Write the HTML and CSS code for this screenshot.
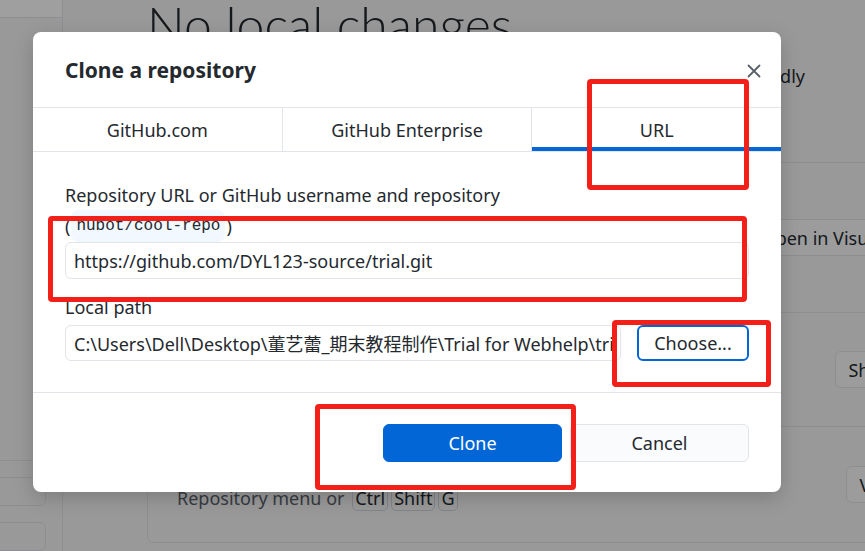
FILE: index.html
```html
<!DOCTYPE html>
<html lang="en">
<head>
<meta charset="utf-8">
<title>Clone a repository</title>
<link rel="stylesheet" href="styles.css">
</head>
<body>
<div class="app">
  <aside class="sidebar">
    <div class="side-top"></div>
    <div class="side-list"></div>
    <div class="side-bottom">
      <div class="side-card"></div>
      <div class="side-card"></div>
    </div>
  </aside>
  <main class="main">
    <h1 class="blank-title">No local changes</h1>
    <p class="blank-desc">There are no uncommitted changes in this repository. Here are some friendly</p>
    <div class="panel">
      <div class="row row-a">
        <div class="row-text">
          <div class="row-title">Open the repository in your external editor</div>
          <div class="row-desc">Select your editor in Options</div>
        </div>
        <button class="bg-btn">Open in Visual Studio Code</button>
      </div>
      <div class="row row-b">
        <div class="row-text">
          <div class="row-title">View the files of your repository in Explorer</div>
          <div class="row-desc">Repository menu or Ctrl Shift F</div>
        </div>
        <button class="bg-btn">Show in Explorer</button>
      </div>
      <div class="row row-c">
        <div class="row-text">
          <div class="row-title">Open the repository page on GitHub in your browser</div>
          <div class="row-desc">Repository menu or <kbd>Ctrl</kbd><kbd>Shift</kbd><kbd>G</kbd></div>
        </div>
        <button class="bg-btn">View on GitHub</button>
      </div>
    </div>
  </main>
</div>

<div class="overlay"></div>

<div class="dialog">
  <header class="dlg-header">
    <h2 class="dlg-title">Clone a repository</h2>
    <button class="close-btn" aria-label="Close">
      <svg width="14" height="14" viewBox="0 0 14 14"><path d="M1.5 1.5L12.5 12.5M12.5 1.5L1.5 12.5" stroke="#586069" stroke-width="1.8" stroke-linecap="round"/></svg>
    </button>
  </header>
  <nav class="tabs">
    <div class="tab">GitHub.com</div>
    <div class="tab">GitHub Enterprise</div>
    <div class="tab selected">URL</div>
  </nav>
  <div class="dlg-body">
    <div class="label">Repository URL or GitHub username and repository</div>
    <div class="hint"><span>(</span><code>hubot/cool-repo</code><span>)</span></div>
    <input class="field field-url" type="text" value="https://github.com/DYL123-source/trial.git" readonly>
    <div class="label label-path">Local path</div>
    <div class="path-row">
      <input class="field field-path" type="text" value="C:\Users\Dell\Desktop\董艺蕾_期末教程制作\Trial for Webhelp\trial" readonly>
      <button class="btn choose-btn">Choose...</button>
    </div>
  </div>
  <footer class="dlg-footer">
    <button class="btn btn-primary">Clone</button>
    <button class="btn btn-cancel">Cancel</button>
  </footer>
</div>

<div class="mark mark-tab"></div>
<div class="mark mark-url"></div>
<div class="mark mark-choose"></div>
<div class="mark mark-clone"></div>
</body>
</html>
```

FILE: styles.css
```css
* { box-sizing: border-box; }
html, body { margin: 0; padding: 0; }
body {
  width: 865px;
  height: 551px;
  overflow: hidden;
  position: relative;
  font-family: "Noto Sans", "Open Sans", "Noto Sans CJK SC", sans-serif;
  color: #24292e;
  background: #f5f6f7;
}

/* ---------- background app ---------- */
.app { display: flex; height: 551px; }
.sidebar {
  width: 63px; flex: none;
  border-right: 1px solid #e1e4e8;
  display: flex; flex-direction: column;
  background: #f5f6f7;
}
.side-top { height: 18px; background: #ffffff; border-bottom: 1px solid #e1e4e8; }
.side-list { flex: 1; }
.side-bottom {
  height: 91px; flex: none;
  border-top: 1px solid #e1e4e8;
  padding: 16px 16px 0 0;
  display: flex; flex-direction: column; gap: 16px;
}
.side-card { height: 36px; margin-left: -12px; border: 1px solid #e1e4e8; border-radius: 6px; }

.main { flex: 1; min-width: 0; overflow: hidden; padding-left: 84px; }
.blank-title {
  margin: 0; padding-top: 0;
  font-family: Lato, "Open Sans", sans-serif;
  font-weight: 300; font-size: 50px; line-height: 48px;
  color: #24292e; white-space: nowrap;
}
.blank-desc {
  margin: 17px 0 0; width: 658px;
  font-size: 18px; line-height: 22px;
  text-align: right; white-space: nowrap; overflow: hidden;
  direction: rtl;
}
.panel {
  margin-top: 75px; width: 869px;
  border: 1px solid #e1e4e8; border-radius: 6px;
}
.row {
  display: flex; align-items: center; justify-content: space-between;
  padding: 0 12px 0 29px;
  border-bottom: 1px solid #e1e4e8;
}
.row:last-child { border-bottom: none; }
.row-a { height: 150px; }
.row-b { height: 114px; }
.row-c { height: 115px; }
.row-title { font-size: 18px; font-weight: 600; line-height: 22px; }
.row-desc { font-size: 18px; line-height: 25px; color: #586069; margin-top: 5px; }
kbd {
  font-family: inherit; font-size: 18px; color: #24292e;
  border: 1px solid #d1d5da; border-radius: 5px;
  padding: 0 2px; margin-left: 3px;
}
.bg-btn {
  height: 37px; padding: 0 12px;
  font: 18px "Noto Sans", sans-serif; color: #24292e;
  background: #fafbfc; border: 1px solid #e1e4e8; border-radius: 6px;
  white-space: nowrap;
}

.overlay { position: absolute; inset: 0; background: rgba(0, 0, 0, 0.375); }

/* ---------- dialog ---------- */
.dialog {
  position: absolute; left: 33px; top: 32px;
  width: 748px; height: 460px;
  background: #fff; border-radius: 8px;
  display: flex; flex-direction: column;
  box-shadow: 0 6px 20px rgba(0, 0, 0, 0.18);
}
.dlg-header {
  height: 75px; flex: none;
  display: flex; align-items: center; justify-content: space-between;
  padding: 0 20px 0 32px;
}
.dlg-title { margin: 0; font-size: 21px; font-weight: 700; line-height: 26px; padding-top: 1px; }
.close-btn {
  width: 14px; height: 14px; padding: 0; border: none; background: none;
  display: flex; margin-top: 2px;
}
.tabs {
  display: flex; height: 45px; flex: none;
  border-top: 1px solid #e1e4e8; border-bottom: 1px solid #e1e4e8;
}
.tab {
  flex: 1; display: flex; align-items: center; justify-content: center;
  font-size: 18px; border-right: 1px solid #e1e4e8;
}
.tab:last-child { border-right: none; }
.tab.selected { box-shadow: inset 0 -4px 0 #0366d6; }

.dlg-body { padding: 32px 32px 0; height: 241px; flex: none; border-bottom: 1px solid #e1e4e8; }
.label { font-size: 18px; line-height: 22px; }
.hint {
  display: flex; align-items: center;
  height: 24px; margin-top: 8px;
  font-size: 18px; line-height: 22px;
}
.hint code {
  font-family: "Liberation Mono", monospace; font-size: 16px; line-height: 20px;
  background: #f1f8ff; border-radius: 8px; padding: 6px 5px; margin: 0 1px;
}
.field {
  display: block; width: 100%;
  font: 18px "Noto Sans", "Noto Sans CJK SC", sans-serif; color: #24292e;
  border: 1px solid #e1e4e8; border-radius: 6px;
  padding: 0 8px; background: #fff; outline: none;
}
.field-url { height: 37px; margin-top: 4px; }
.label-path { margin-top: 17px; }
.path-row { display: flex; gap: 16px; align-items: center; margin-top: 7px; }
.field-path { flex: 1; height: 36px; min-width: 0; }
.btn {
  font: 18px "Noto Sans", sans-serif; border-radius: 6px; cursor: pointer;
}
.choose-btn {
  width: 112px; height: 36px; flex: none;
  background: #fff; color: #24292e; border: 2px solid #0366d6;
}
.dlg-footer {
  flex: 1; display: flex; justify-content: flex-end; gap: 8px;
  padding: 31px 32px 0 0;
}
.btn-primary, .btn-cancel { width: 179px; height: 38px; }
.btn-primary { background: #0366d6; color: #fff; border: 1px solid #0366d6; }
.btn-cancel { background: #fafbfc; color: #24292e; border: 1px solid #e1e4e8; }

/* ---------- red annotation marks ---------- */
.mark { position: absolute; border: 5px solid #f3201a; border-radius: 4px; }
.mark-tab { left: 587px; top: 79px; width: 162px; height: 111px; }
.mark-url { left: 48px; top: 216px; width: 699px; height: 86px; }
.mark-choose { left: 612px; top: 320px; width: 159px; height: 67px; }
.mark-clone { left: 315px; top: 404px; width: 261px; height: 86px; }
```
